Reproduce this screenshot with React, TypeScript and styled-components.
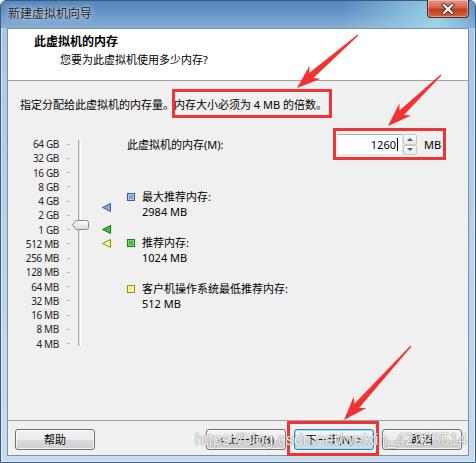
import React from "react";
import styled, { createGlobalStyle, css } from "styled-components";

// fonts
const UI_FONT = `"Noto Sans", "Noto Sans CJK SC", sans-serif`;

// data
const SCALE = ["64 GB", "32 GB", "16 GB", "8 GB", "4 GB", "2 GB", "1 GB", "512 MB", "256 MB", "128 MB", "64 MB", "32 MB", "16 MB", "8 MB", "4 MB"];
const ROW = 14.25;
const TOP_MB = 65536;
const MEMORY = 1260;

const posOf = (mb: number) => ROW / 2 + Math.log2(TOP_MB / mb) * ROW;

const LEGEND = [
    { label: "最大推荐内存:", value: "2984 MB", mb: 2984, fill: "#87a6d9", stroke: "#3b5c9c" },
    { label: "推荐内存:", value: "1024 MB", mb: 1024, fill: "#44bb44", stroke: "#1f7a1f" },
    { label: "客户机操作系统最低推荐内存:", value: "512 MB", mb: 512, fill: "#f6f67a", stroke: "#8f8f2a" },
];

const ARROWS = [
    { from: [358, 35], to: [297, 88] },
    { from: [441, 75], to: [388, 126] },
    { from: [411, 346], to: [344, 420] },
];

const arrowPoints = (x1: number, y1: number, x2: number, y2: number) => {
    const dx = x2 - x1;
    const dy = y2 - y1;
    const len = Math.hypot(dx, dy);
    const ux = dx / len;
    const uy = dy / len;
    const nx = -uy;
    const ny = ux;
    const pts: [number, number][] = [
        [0, 0.6], [len - 19, 3.2], [len - 24, 8.5], [len, 0],
        [len - 24, -8.5], [len - 19, -3.2], [0, -0.6],
    ];
    return pts
        .map(([s, t]) => `${(x1 + ux * s + nx * t).toFixed(1)},${(y1 + uy * s + ny * t).toFixed(1)}`)
        .join(" ");
};

const GlobalStyle = createGlobalStyle`
    html, body {
        margin: 0;
        padding: 0;
        background: #ffffff;
    }

    body {
        width: 476px;
        height: 463px;
        overflow: hidden;
        font-family: ${UI_FONT};
        font-size: 11px;
        color: #000;
    }

    * {
        box-sizing: border-box;
    }
`;

// frame
const Page = styled.div`
    position: relative;
    width: 476px;
    height: 463px;
`;

const Window = styled.div`
    width: 100%;
    height: 100%;
    display: flex;
    flex-direction: column;
    padding: 0 6px 6px;
    border: 1px solid #3a5b80;
    border-radius: 6px 6px 0 0;
    background: linear-gradient(180deg, #a9c6e4 0%, #bcd4eb 60%, #c6dbee 100%);
    box-shadow: inset 0 0 0 1px rgba(255, 255, 255, 0.5);
`;

const TitleBar = styled.div`
    height: 27px;
    margin: 0 -6px;
    padding: 0 6px 0 7px;
    display: flex;
    align-items: flex-start;
    justify-content: space-between;
    border-radius: 5px 5px 0 0;
    background:
        linear-gradient(90deg, rgba(255, 255, 255, 0) 72%, rgba(168, 226, 236, 0.75) 92%, rgba(120, 178, 214, 0.2) 100%),
        linear-gradient(180deg, #5586bb 0%, #6897c8 50%, #86afd6 100%);
`;

const Title = styled.span`
    margin-top: 5px;
    font-size: 12px;
    line-height: 16px;
    color: #1d1d1d;
    text-shadow: 0 0 6px rgba(255, 255, 255, 0.85), 0 0 2px rgba(255, 255, 255, 0.6);
`;

const CloseButton = styled.div`
    width: 42px;
    height: 18px;
    margin-top: -1px;
    display: flex;
    align-items: center;
    justify-content: center;
    border: 1px solid #5a2620;
    border-top: none;
    border-radius: 0 0 4px 4px;
    background: linear-gradient(180deg, #e49a88 0%, #d4634b 45%, #c23b20 55%, #d5683f 100%);
    box-shadow: inset 0 0 0 1px rgba(255, 255, 255, 0.35);
`;

const Client = styled.div`
    flex: 1;
    display: flex;
    flex-direction: column;
    border: 1px solid #7990ae;
    background: #f0f0f0;
`;

// header
const Header = styled.div`
    height: 52px;
    padding: 5px 0 0 26px;
    background: #ffffff;
    border-bottom: 1px solid #a0a0a0;
`;

const HeaderTitle = styled.div`
    font-size: 12px;
    font-weight: 700;
    line-height: 16px;
`;

const HeaderSub = styled.div`
    margin-top: 2px;
    padding-left: 26px;
    line-height: 16px;
`;

// body
const Body = styled.div`
    flex: 1;
    padding: 16px 0 0 12px;
`;

const Description = styled.div`
    line-height: 16px;
    white-space: nowrap;
`;

type Inset = { $t: number; $r: number; $b: number; $l: number; $block?: boolean };

const Highlight = styled.span<Inset>`
    position: relative;
    display: ${({ $block }) => ($block ? "inline-flex" : "inline")};

    &::after {
        content: "";
        position: absolute;
        top: ${({ $t }) => $t}px;
        right: ${({ $r }) => $r}px;
        bottom: ${({ $b }) => $b}px;
        left: ${({ $l }) => $l}px;
        border: 3px solid #ef3434;
        pointer-events: none;
    }
`;

const Main = styled.div`
    margin-top: 21px;
    display: flex;
`;

// scale
const ScaleBox = styled.div`
    display: flex;
    padding-top: 3px;
`;

const ScaleLabels = styled.div`
    display: flex;
    flex-direction: column;
`;

const ScaleRow = styled.div`
    height: ${ROW}px;
    display: flex;
    align-items: center;
`;

const ScaleLabel = styled.span`
    width: 39px;
    text-align: right;
    font-size: 10px;
    letter-spacing: -0.35px;
    line-height: 12px;
    color: #222;
`;

const Tick = styled.span`
    width: 3px;
    height: 1px;
    margin-left: 8px;
    background: #b8b8b8;
`;

const TrackColumn = styled.div`
    position: relative;
    width: 45px;
`;

const Groove = styled.div`
    position: absolute;
    left: 8px;
    top: 3px;
    width: 3px;
    height: 206px;
    border-left: 1px solid #a8a8a8;
    border-right: 1px solid #ffffff;
    background: #e2e2e2;
`;

const Thumb = styled.svg`
    position: absolute;
    left: 2px;
`;

const Marker = styled.svg`
    position: absolute;
    left: 32px;
`;

// panel
const Panel = styled.div`
    margin-left: 12px;
    display: flex;
    flex-direction: column;
`;

const MemoryRow = styled.div`
    height: 21px;
    display: flex;
    align-items: center;
`;

const MemoryLabel = styled.span`
    width: 210px;
    line-height: 14px;
`;

const InputGroup = styled.div`
    display: flex;
    align-items: center;
`;

const SpinField = styled.div`
    width: 66px;
    height: 21px;
    padding-right: 4px;
    display: flex;
    align-items: center;
    justify-content: flex-end;
    border: 1px solid;
    border-color: #abadb3 #dbdfe6 #e3e9ef #e2e3ea;
    background: #ffffff;
    line-height: 14px;
`;

const Caret = styled.span`
    width: 1px;
    height: 13px;
    margin-left: 1px;
    background: #000;
`;

const Spinner = styled.div`
    width: 14px;
    height: 21px;
    display: flex;
    flex-direction: column;
`;

const SpinButton = styled.div<{ $up?: boolean }>`
    flex: 1;
    display: flex;
    align-items: center;
    justify-content: center;
    border: 1px solid #cacaca;
    border-radius: 2px;
    background: linear-gradient(180deg, #fbfbfb 0%, #e9e9e9 100%);

    &::before {
        content: "";
        border-left: 3px solid transparent;
        border-right: 3px solid transparent;
        ${({ $up }) => ($up ? "border-bottom: 3px solid #5a5a5a;" : "border-top: 3px solid #5a5a5a;")}
    }
`;

const Unit = styled.span`
    margin-left: 7px;
    line-height: 14px;
`;

const Legend = styled.div`
    margin-top: 34px;
    display: flex;
    flex-direction: column;
    gap: 16px;
`;

const LegendItem = styled.div`
    display: grid;
    grid-template-columns: 8px auto;
    column-gap: 7px;
    line-height: 15px;
`;

const Swatch = styled.span<{ $fill: string; $stroke: string }>`
    width: 8px;
    height: 8px;
    margin-top: 4px;
    border: 1px solid ${({ $stroke }) => $stroke};
    background: ${({ $fill }) => $fill};
    box-shadow: inset 0 0 0 1px rgba(255, 255, 255, 0.3);
`;

const LegendText = styled.div`
    white-space: nowrap;
`;

// footer
const Footer = styled.div`
    height: 35px;
    padding: 8px 6px 0 7px;
    display: flex;
    align-items: flex-start;
    border-top: 1px solid #a0a0a0;
`;

const Spacer = styled.div`
    flex: 1;
`;

const NavGroup = styled.div`
    display: flex;
    gap: 8px;
`;

const Button = styled.div<{ $default?: boolean }>`
    width: 80px;
    height: 21px;
    display: flex;
    align-items: center;
    justify-content: center;
    border: 1px solid #707070;
    border-radius: 3px;
    background: linear-gradient(180deg, #f2f2f2 0%, #ebebeb 50%, #dddddd 51%, #cfcfcf 100%);
    box-shadow: inset 0 0 0 1px rgba(255, 255, 255, 0.75);
    line-height: 14px;
    white-space: nowrap;

    ${({ $default }) =>
        $default &&
        css`
            border-color: #3c7fb1;
            background: linear-gradient(180deg, #f1f7fb 0%, #e6eff5 50%, #d6e3ec 51%, #cbdbe6 100%);
            box-shadow: inset 0 0 0 1px #9fdcf6;
        `}
`;

// overlays
const Overlay = styled.svg`
    position: absolute;
    inset: 0;
    pointer-events: none;
`;

const Watermark = styled.div`
    position: absolute;
    left: 195px;
    top: 431px;
    font-family: "Liberation Sans", sans-serif;
    font-size: 16px;
    line-height: 18px;
    color: rgba(255, 255, 255, 0.9);
    text-shadow: 0 0 1px rgba(70, 70, 70, 0.75), 0 0 2px rgba(120, 120, 120, 0.4);
    pointer-events: none;
    white-space: nowrap;
`;

export default function App() {
    const thumbY = posOf(MEMORY);

    return (
        <Page>
            <GlobalStyle />
            <Window>
                <TitleBar>
                    <Title>新建虚拟机向导</Title>
                    <CloseButton>
                        <svg width="14" height="12" viewBox="0 0 14 12">
                            <path d="M3 2 L11 10 M11 2 L3 10" stroke="#5a2a22" strokeWidth="4" strokeLinecap="square" />
                            <path d="M3 2 L11 10 M11 2 L3 10" stroke="#ffffff" strokeWidth="2.2" strokeLinecap="square" />
                        </svg>
                    </CloseButton>
                </TitleBar>

                <Client>
                    <Header>
                        <HeaderTitle>此虚拟机的内存</HeaderTitle>
                        <HeaderSub>您要为此虚拟机使用多少内存?</HeaderSub>
                    </Header>

                    <Body>
                        <Description>
                            指定分配给此虚拟机的内存量。
                            <Highlight $t={-8} $r={-5} $b={-6} $l={-2}>内存大小必须为 4 MB 的倍数。</Highlight>
                        </Description>

                        <Main>
                            <ScaleBox>
                                <ScaleLabels>
                                    {SCALE.map((label) => (
                                        <ScaleRow key={label}>
                                            <ScaleLabel>{label}</ScaleLabel>
                                            <Tick />
                                        </ScaleRow>
                                    ))}
                                </ScaleLabels>
                                <TrackColumn>
                                    <Groove />
                                    <Thumb width="17" height="10" viewBox="0 0 17 10" style={{ top: thumbY - 5 }}>
                                        <defs>
                                            <linearGradient id="thumb" x1="0" y1="0" x2="0" y2="1">
                                                <stop offset="0" stopColor="#ffffff" />
                                                <stop offset="1" stopColor="#d9d9d9" />
                                            </linearGradient>
                                        </defs>
                                        <path d="M0.5 5 L4 0.5 H14.5 Q16.5 0.5 16.5 2.5 V7.5 Q16.5 9.5 14.5 9.5 H4 Z" fill="url(#thumb)" stroke="#8a8a8a" />
                                    </Thumb>
                                    {LEGEND.map((m) => (
                                        <Marker key={m.mb} width="9" height="9" viewBox="0 0 9 9" style={{ top: posOf(m.mb) - 4.5 }}>
                                            <polygon points="8.5,0.5 8.5,8.5 0.5,4.5" fill={m.fill} stroke={m.stroke} strokeLinejoin="round" />
                                        </Marker>
                                    ))}
                                </TrackColumn>
                            </ScaleBox>

                            <Panel>
                                <MemoryRow>
                                    <MemoryLabel>此虚拟机的内存(M):</MemoryLabel>
                                    <Highlight $block $t={-6} $r={-5} $b={-5} $l={-4}>
                                        <InputGroup>
                                            <SpinField>
                                                {MEMORY}
                                                <Caret />
                                            </SpinField>
                                            <Spinner>
                                                <SpinButton $up />
                                                <SpinButton />
                                            </Spinner>
                                            <Unit>MB</Unit>
                                        </InputGroup>
                                    </Highlight>
                                </MemoryRow>

                                <Legend>
                                    {LEGEND.map((item) => (
                                        <LegendItem key={item.label}>
                                            <Swatch $fill={item.fill} $stroke={item.stroke} />
                                            <LegendText>{item.label}</LegendText>
                                            <span />
                                            <LegendText>{item.value}</LegendText>
                                        </LegendItem>
                                    ))}
                                </Legend>
                            </Panel>
                        </Main>
                    </Body>

                    <Footer>
                        <Button>帮助</Button>
                        <Spacer />
                        <NavGroup>
                            <Button>&lt; 上一步(B)</Button>
                            <Highlight $block $t={-8} $r={-5} $b={-6} $l={-7}>
                                <Button $default>下一步(N) &gt;</Button>
                            </Highlight>
                            <Button>取消</Button>
                        </NavGroup>
                    </Footer>
                </Client>
            </Window>

            <Watermark>https://blog.csdn.net/weixin_42223514</Watermark>

            <Overlay width="476" height="463" viewBox="0 0 476 463">
                {ARROWS.map((a, i) => (
                    <polygon key={i} points={arrowPoints(a.from[0], a.from[1], a.to[0], a.to[1])} fill="#f43030" />
                ))}
            </Overlay>
        </Page>
    );
}
